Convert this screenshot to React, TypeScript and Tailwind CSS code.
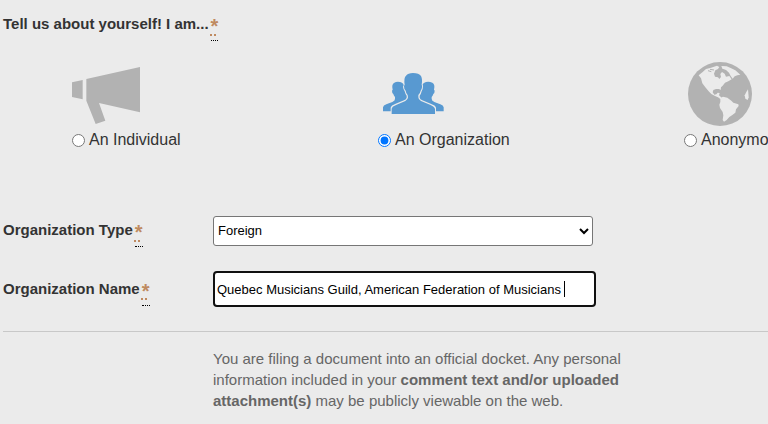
import type { ReactNode } from 'react';

function Required() {
  return (
    <abbr
      title="required"
      className="ml-0.5 border-b border-dotted border-black pb-0.5 text-xl leading-6 text-[#bf8a60] underline decoration-dotted decoration-2 underline-offset-1"
    >
      *
    </abbr>
  );
}

function MegaphoneIcon() {
  return (
    <svg className="h-16 w-[70px]" viewBox="0 0 210 192" fill="#b2b2b2" aria-hidden="true">
      <path d="M0 61 32 54V112L0 105Z" />
      <path d="M43 51 204 15V151L81 123 100 176 71 186 43 116Z" />
    </svg>
  );
}

function PeopleIcon() {
  return (
    <svg className="ml-[5px] h-16 w-[62px]" viewBox="69 6 186 192" fill="#5899d1" aria-hidden="true">
      <path d="M95 162V146Q96 139 110 134L136 123Q144 119 144 112L143 105Q138 100 137 92Q132 89 132 79Q133 74 134 74Q131 53 138 47Q144 39 159 39Q177 39 183 48Q188 57 185 74Q187 77 186 82Q185 90 182 92Q180 101 175 105V112Q175 119 183 123L210 134Q223 139 225 147V162Z" />
      <path d="M69 154V142Q70 136 79 133L97 126Q106 122 105 116V111Q101 107 100 102Q96 100 96 92L98 89Q94 72 103 68Q110 64 120 66Q130 68 131 76L129 80Q130 89 134 94Q136 103 140 107V113Q139 118 132 121L107 131Q93 136 92 143V154Z" />
      <path d="M251 154V142Q250 136 241 133L223 126Q214 122 215 116V111Q219 107 220 102Q224 100 224 92L222 89Q226 72 217 68Q208 64 198 66Q190 68 188 73L189 78Q189 89 185 94Q183 103 179 107V113Q180 118 187 121L212 131Q227 136 228 143V154Z" />
    </svg>
  );
}

function GlobeIcon() {
  return (
    <svg className="ml-1 size-16" viewBox="56 36 192 192" aria-hidden="true">
      <circle cx="152" cy="132" r="96" fill="#b2b2b2" />
      <g fill="#ebebeb">
        <path d="M88 76 100 66 110 57 125 53 143 47 150 51 146 57 138 61 134 71 137 80 146 82 150 87 155 81 153 72 158 66 166 71 170 80 180 78 187 88 177 94 167 98 160 107 155 112 154 120 149 117 140 117 132 120 130 127 135 134 141 133 145 128 151 129 149 136 154 140 158 146 153 147 146 142 137 138 126 132 118 124 108 112 99 100 95 85Z" />
        <path d="M156 48 172 49 184 54 198 61 213 74 204 76 196 79 190 86 184 78 179 68 170 60 159 56Z" />
        <path d="M153 144 161 140 174 143 186 152 192 158 207 163 208 168 200 178 198 188 188 196 180 201 172 210 164 215 160 210 162 196 160 186 152 174 150 164 153 156Z" />
        <path d="M236 118 231 126 226 136 228 146 235 150 238 142Z" />
      </g>
      <path
        d="M116 62 126 65M122 58 134 60M163 60 171 64"
        fill="none"
        stroke="#b2b2b2"
        strokeWidth="3"
      />
    </svg>
  );
}

interface FilerOptionProps {
  label: string;
  value: string;
  icon: ReactNode;
  defaultChecked?: boolean;
}

function FilerOption({ label, value, icon, defaultChecked }: FilerOptionProps) {
  return (
    <label className="flex shrink-0 basis-2/5 flex-col gap-0.5 pl-[69px]">
      {icon}
      <span className="flex items-center gap-1 whitespace-nowrap text-base text-[#333]">
        <input
          type="radio"
          name="filer"
          value={value}
          defaultChecked={defaultChecked}
          className="size-[13px] accent-[#0075ff]"
        />
        {label}
      </span>
    </label>
  );
}

export default function App() {
  return (
    <div className="min-h-screen overflow-x-hidden bg-[#ebebeb] pl-[3px] font-['Liberation_Sans',Arial,sans-serif] text-[15px] text-[#333]">
      <form>
        <fieldset className="min-w-0">
          <legend className="flex pt-3.5 font-bold leading-5">
            Tell us about yourself! I am...
            <Required />
          </legend>
          <div className="mt-[21px] flex">
            <FilerOption label="An Individual" value="individual" icon={<MegaphoneIcon />} />
            <FilerOption label="An Organization" value="organization" icon={<PeopleIcon />} defaultChecked />
            <FilerOption label="Anonymous" value="anonymous" icon={<GlobeIcon />} />
          </div>
        </fieldset>

        <div className="mt-[62px] flex items-center">
          <label htmlFor="org-type" className="flex w-[210px] shrink-0 pt-1.5 font-bold leading-5">
            Organization Type
            <Required />
          </label>
          <select
            id="org-type"
            defaultValue="Foreign"
            className="h-[30px] w-[380px] rounded-[3px] border border-[#767676] bg-white text-[13px] text-black"
          >
            <option>Foreign</option>
            <option>Company</option>
          </select>
        </div>

        <div className="mt-6 flex items-center">
          <label htmlFor="org-name" className="flex w-[210px] shrink-0 pt-1.5 font-bold leading-5">
            Organization Name
            <Required />
          </label>
          <div className="relative w-[383px]">
            <input
              id="org-name"
              type="text"
              defaultValue="Quebec Musicians Guild, American Federation of Musicians "
              className="h-9 w-full rounded border-2 border-[#101010] bg-white px-0.5 text-[13px] text-black outline-none"
            />
            <span className="absolute left-[351px] top-2.5 h-4 w-px bg-black" />
          </div>
        </div>
      </form>

      <hr className="mt-6 border-[#c8c8c8]" />
      <p className="ml-[210px] mt-4 w-[420px] leading-[21px] text-[#666]">
        You are filing a document into an official docket. Any personal information included in your{' '}
        <strong>comment text and/or uploaded attachment(s)</strong> may be publicly viewable on the web.
      </p>
    </div>
  );
}
